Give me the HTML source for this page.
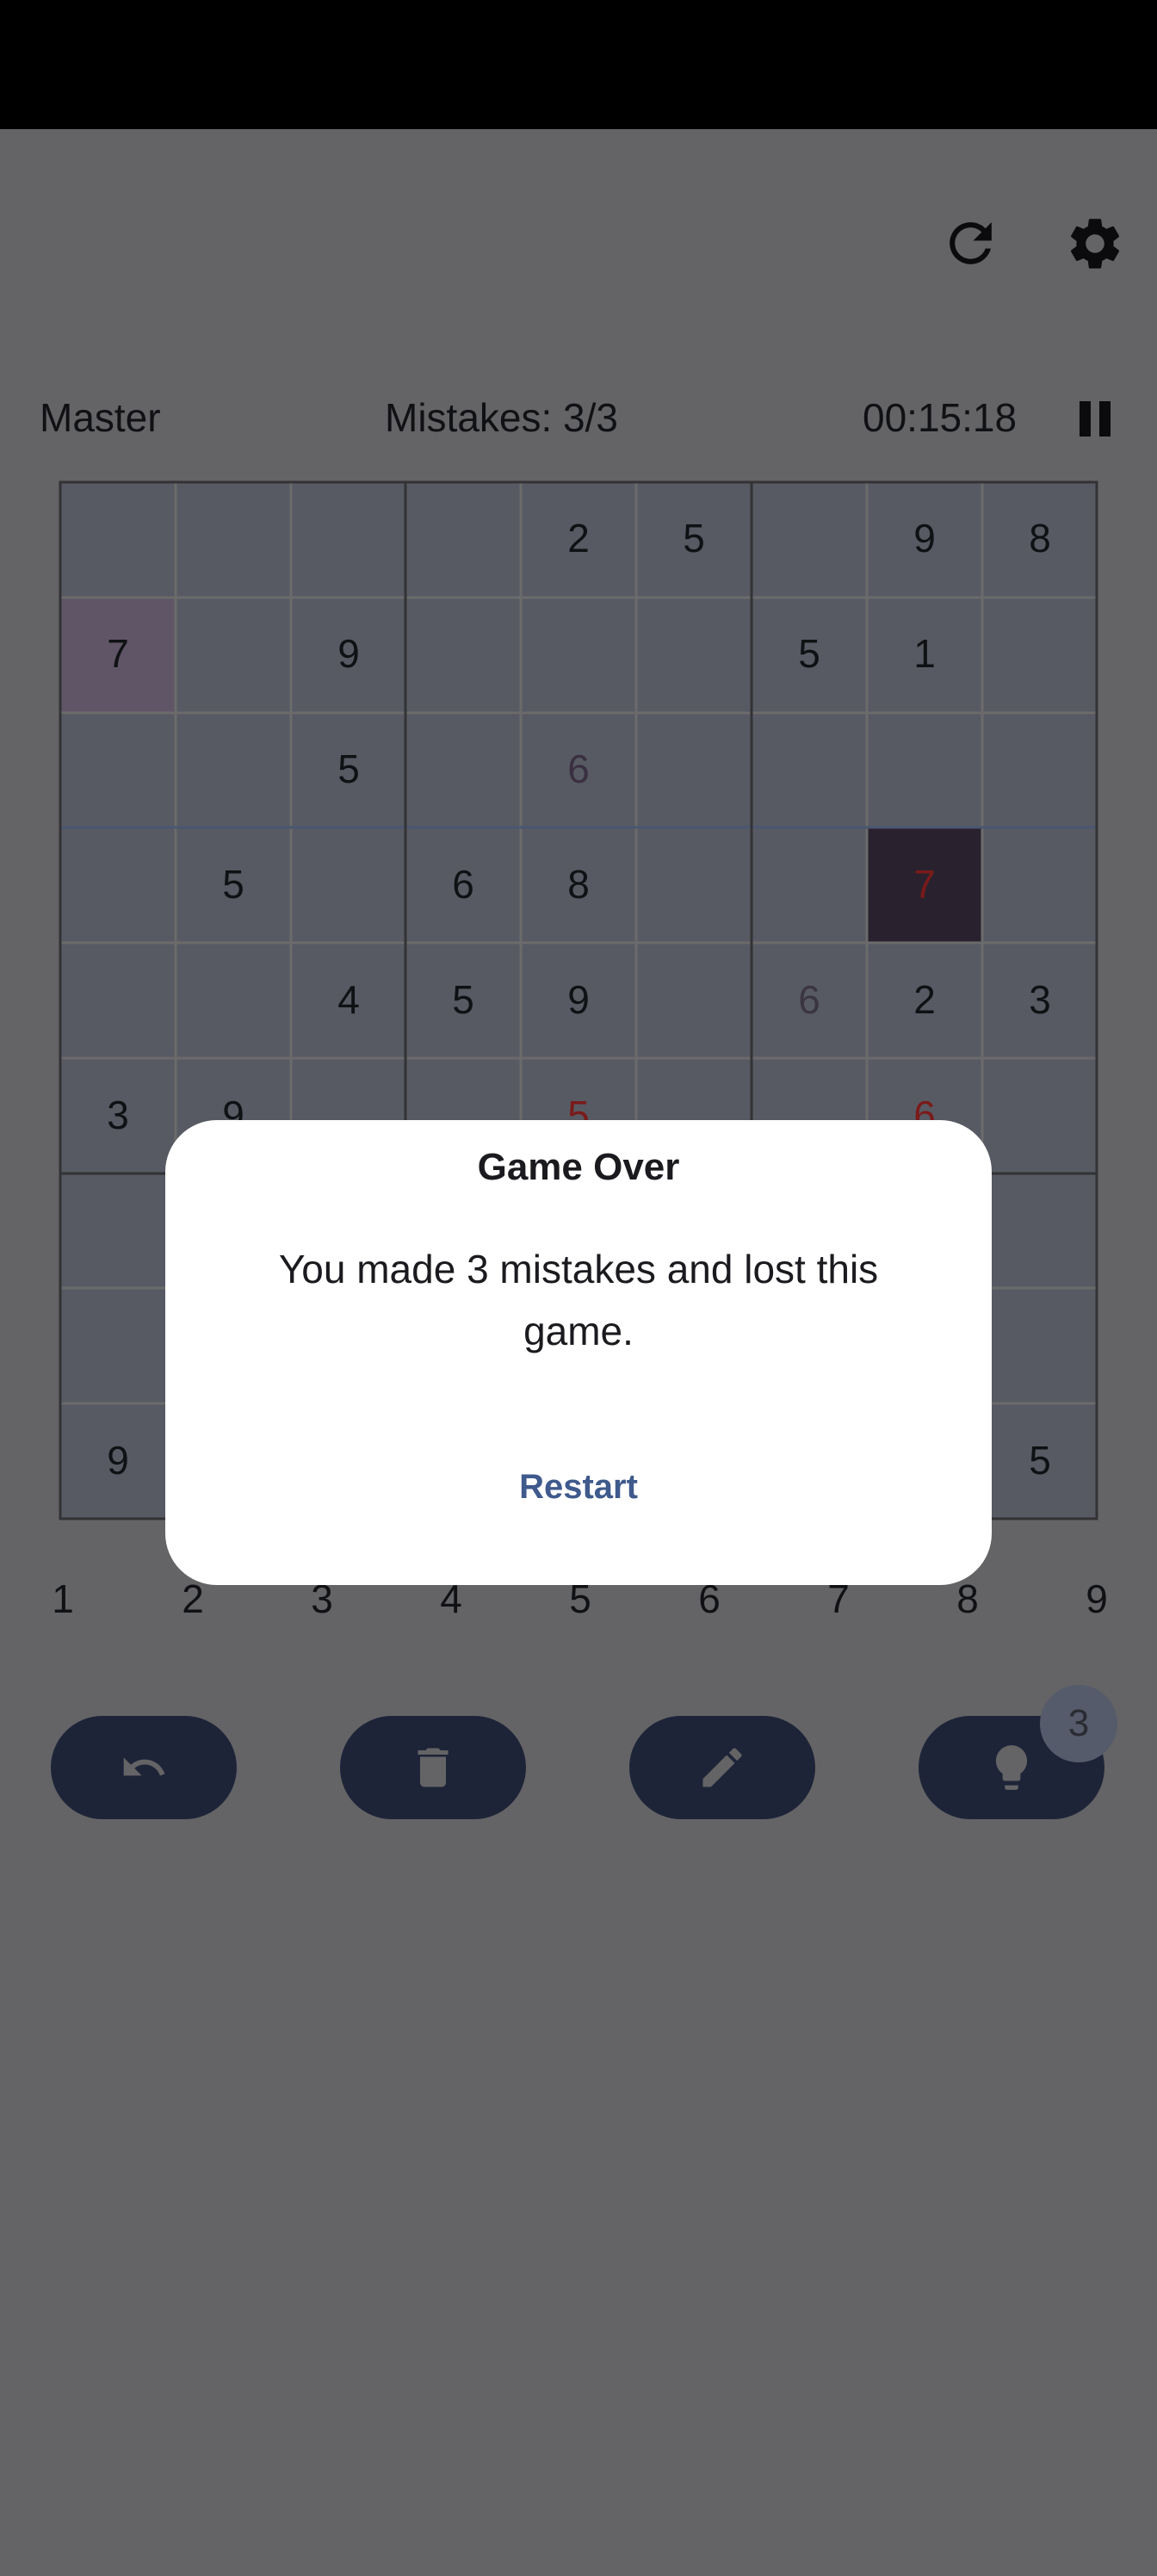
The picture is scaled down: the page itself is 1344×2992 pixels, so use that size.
<!DOCTYPE html>
<html><head><meta charset="utf-8"><style>
body{margin:0;width:1344px;height:2992px;background:#646466;position:relative;overflow:hidden;font-family:"Liberation Sans",sans-serif;}
.a{position:absolute}
.t{color:#101114;font-size:46px;}
.btn{position:absolute;top:1993px;width:216px;height:120px;border-radius:60px;background:#1e2438;display:flex;align-items:center;justify-content:center}
.num{position:absolute;top:1830px;font-size:46px;color:#101114;width:60px;margin-left:-30px;text-align:center}
</style></head><body>
<div class="a" style="left:0;top:0;width:1344px;height:150px;background:#000"></div>
<svg class="a" style="left:1091px;top:246px" width="73" height="73" viewBox="0 0 24 24"><path fill="#0b0b0d" d="M17.65 6.35A7.958 7.958 0 0 0 12 4c-4.42 0-7.990 3.58-7.99 8s3.57 8 7.99 8c3.730 0 6.84-2.55 7.73-6h-2.08A5.99 5.99 0 0 1 12 18c-3.31 0-6-2.69-6-6s2.69-6 6-6c1.66 0 3.14.69 4.22 1.78L13 11h7V4l-2.35 2.35z"/></svg>
<svg class="a" style="left:1236px;top:247px" width="72" height="72" viewBox="0 0 24 24"><path fill="#0b0b0d" d="M19.14 12.94c.04-.3.06-.61.06-.94 0-.32-.02-.64-.07-.94l2.03-1.58a.49.49 0 0 0 .12-.61l-1.920-3.32a.488.488 0 0 0-.59-.22l-2.39.96c-.5-.38-1.03-.7-1.62-.94l-.36-2.54a.484.484 0 0 0-.48-.41h-3.84c-.24 0-.43.17-.47.41l-.36 2.54c-.59.24-1.13.57-1.62.94l-2.39-.96c-.22-.08-.47 0-.59.22L2.74 8.87c-.12.21-.08.47.12.61l2.03 1.58c-.05.3-.09.63-.09.94s.02.64.07.94l-2.03 1.58a.49.49 0 0 0-.12.61l1.92 3.32c.12.22.37.29.59.22l2.39-.96c.5.38 1.03.7 1.62.94l.36 2.54c.05.24.24.41.48.41h3.84c.24 0 .44-.17.47-.41l.36-2.54c.59-.24 1.13-.56 1.62-.94l2.39.96c.22.08.47 0 .59-.22l1.92-3.32c.12-.22.07-.47-.12-.61l-2.01-1.58zM12 15.6c-1.98 0-3.6-1.62-3.6-3.6s1.62-3.6 3.6-3.6 3.6 1.62 3.6 3.6-1.62 3.6-3.6 3.6z"/></svg>
<div class="a t" style="left:46px;top:458px">Master</div>
<div class="a t" style="left:447px;top:458px">Mistakes: 3/3</div>
<div class="a t" style="left:1002px;top:458px">00:15:18</div>
<div class="a" style="left:1254px;top:466px;width:13px;height:41px;background:#0b0b0d"></div>
<div class="a" style="left:1277px;top:466px;width:13px;height:41px;background:#0b0b0d"></div>

<svg class="a" style="left:0;top:0" width="1344" height="2992" font-family="Liberation Sans, sans-serif" font-size="46">
<rect x="70" y="560" width="1204" height="1204" fill="#575a63"/>
<rect x="70" y="694" width="134" height="134" fill="#5f5566"/>
<rect x="1007" y="961" width="134" height="134" fill="#29222e"/>
<g stroke="#6b6b6b" stroke-width="3">
<line x1="204" y1="560" x2="204" y2="1764"/><line x1="338" y1="560" x2="338" y2="1764"/>
<line x1="605" y1="560" x2="605" y2="1764"/><line x1="739" y1="560" x2="739" y2="1764"/>
<line x1="1007" y1="560" x2="1007" y2="1764"/><line x1="1141" y1="560" x2="1141" y2="1764"/>
<line x1="70" y1="694" x2="1274" y2="694"/><line x1="70" y1="828" x2="1274" y2="828"/>
<line x1="70" y1="1095" x2="1274" y2="1095"/><line x1="70" y1="1229" x2="1274" y2="1229"/>
<line x1="70" y1="1496" x2="1274" y2="1496"/><line x1="70" y1="1630" x2="1274" y2="1630"/>
</g>
<line x1="70" y1="961" x2="1274" y2="961" stroke="#4a5670" stroke-width="3"/>
<g stroke="#333336" stroke-width="3">
<line x1="471" y1="560" x2="471" y2="1764"/><line x1="873" y1="560" x2="873" y2="1764"/>
<line x1="70" y1="1363" x2="1274" y2="1363"/>
<rect x="70" y="560" width="1204" height="1204" fill="none"/>
</g>
<g fill="#101114" text-anchor="middle">
<text x="672" y="641">2</text><text x="806" y="641">5</text><text x="1074" y="641">9</text><text x="1208" y="641">8</text>
<text x="137" y="775">7</text><text x="405" y="775">9</text><text x="940" y="775">5</text><text x="1074" y="775">1</text>
<text x="405" y="909">5</text><text x="672" y="909" fill="#3a2f40">6</text>
<text x="271" y="1043">5</text><text x="538" y="1043">6</text><text x="672" y="1043">8</text><text x="1074" y="1043" fill="#7a1a1a">7</text>
<text x="405" y="1177">4</text><text x="538" y="1177">5</text><text x="672" y="1177">9</text><text x="940" y="1177" fill="#3a3540">6</text><text x="1074" y="1177">2</text><text x="1208" y="1177">3</text>
<text x="137" y="1311">3</text><text x="271" y="1311">9</text><text x="672" y="1311" fill="#7a1a1a">5</text><text x="1074" y="1311" fill="#7a1a1a">6</text>
<text x="137" y="1712">9</text><text x="1208" y="1712">5</text>
</g>
</svg>

<div class="num" style="left:73px">1</div><div class="num" style="left:224px">2</div><div class="num" style="left:374px">3</div>
<div class="num" style="left:524px">4</div><div class="num" style="left:674px">5</div><div class="num" style="left:824px">6</div>
<div class="num" style="left:974px">7</div><div class="num" style="left:1124px">8</div><div class="num" style="left:1274px">9</div>

<div class="btn" style="left:59px"><svg width="56" height="56" viewBox="0 0 24 24"><path fill="#646466" d="M12.5 8c-2.65 0-5.05.99-6.9 2.6L2 7v9h9l-3.62-3.62c1.39-1.16 3.16-1.88 5.12-1.88 3.54 0 6.55 2.31 7.6 5.5l2.37-.78C21.080 11.03 17.15 8 12.5 8z"/></svg></div>
<div class="btn" style="left:395px"><svg width="60" height="60" viewBox="0 0 24 24"><path fill="#646466" d="M6 19c0 1.1.9 2 2 2h8c1.1 0 2-.9 2-2V7H6v12zM19 4h-3.5l-1-1h-5l-1 1H5v2h14V4z"/></svg></div>
<div class="btn" style="left:731px"><svg width="60" height="60" viewBox="0 0 24 24"><path fill="#646466" d="M3 17.25V21h3.75L17.81 9.94l-3.75-3.75L3 17.25zM20.71 7.04a1 1 0 0 0 0-1.41l-2.34-2.34a1 1 0 0 0-1.41 0l-1.83 1.83 3.75 3.75 1.83-1.83z"/></svg></div>
<div class="btn" style="left:1067px"><svg width="62" height="62" viewBox="0 0 24 24"><path fill="#646466" d="M9 21c0 .55.45 1 1 1h4c.55 0 1-.45 1-1v-1H9v1zm3-19C8.14 2 5 5.14 5 9c0 2.38 1.19 4.47 3 5.74V17c0 .55.45 1 1 1h6c.55 0 1-.45 1-1v-2.26c1.81-1.27 3-3.36 3-5.74 0-3.86-3.14-7-7-7z"/></svg></div>
<div class="a" style="left:1208px;top:1957px;width:90px;height:90px;border-radius:50%;background:#565b6b;color:#2a2c33;font-size:44px;line-height:90px;text-align:center">3</div>

<div class="a" style="left:192px;top:1301px;width:960px;height:540px;background:#fff;border-radius:60px;text-align:center">
<div style="position:absolute;top:30px;width:100%;font-size:44px;font-weight:bold;color:#1b1b1f">Game Over</div>
<div style="position:absolute;top:137px;left:80px;right:80px;font-size:46px;line-height:72px;color:#1b1b1f">You made 3 mistakes and lost this game.</div>
<div style="position:absolute;top:404px;width:100%;font-size:40px;font-weight:bold;color:#3f5a8c">Restart</div>
</div>
</body></html>
